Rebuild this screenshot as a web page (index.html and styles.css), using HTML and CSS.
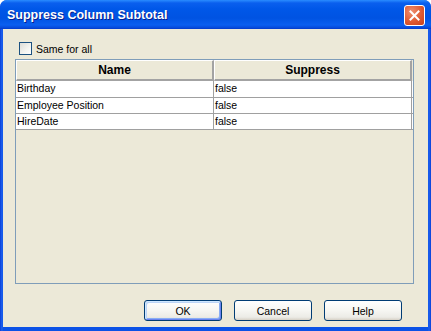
FILE: index.html
```html
<!DOCTYPE html>
<html lang="en">
<head>
  <meta charset="UTF-8" />
  <title>Suppress Column Subtotal</title>
  <link rel="stylesheet" href="styles.css">
</head>
<body>
  <div class="window">
    <div class="titlebar">
      <span class="title">Suppress Column Subtotal</span>
      <button class="close-btn" aria-label="Close">
        <svg width="11" height="11" viewBox="0 0 11 11">
          <path d="M1.5 1.5 L9.5 9.5 M9.5 1.5 L1.5 9.5" stroke="#fff" stroke-width="2" stroke-linecap="square" />
        </svg>
      </button>
    </div>

    <div class="content">
      <label class="same-all">
        <span class="checkbox"></span>
        Same for all
      </label>

      <div class="scroll-pane">
        <div class="grid-row header">
          <div class="head-cell">Name</div>
          <div class="head-cell">Suppress</div>
        </div>
        <div class="grid-row">
          <div class="cell">Birthday</div>
          <div class="cell">false</div>
        </div>
        <div class="grid-row">
          <div class="cell">Employee Position</div>
          <div class="cell">false</div>
        </div>
        <div class="grid-row">
          <div class="cell">HireDate</div>
          <div class="cell">false</div>
        </div>
      </div>

      <div class="actions">
        <button class="btn default">OK</button>
        <button class="btn">Cancel</button>
        <button class="btn">Help</button>
      </div>
    </div>
  </div>
</body>
</html>
```

FILE: styles.css
```css
html, body {
  margin: 0;
  background: #fff;
}
body {
  font-family: 'Liberation Sans', Arial, sans-serif;
  font-size: 10.5px;
  color: #000;
}
.window {
  width: 431px;
  height: 331px;
  display: flex;
  flex-direction: column;
  background: linear-gradient(90deg, #0a3fd6 0, #1f62f0 2px, #0b52e6 3px, #0b52e6 428px, #1f62f0 429px, #0a3fd6 100%);
  border-radius: 7px 7px 0 0;
  overflow: hidden;
}
.titlebar {
  height: 29px;
  flex: none;
  display: flex;
  align-items: center;
  justify-content: space-between;
  padding: 0 6px 0 7px;
  background: linear-gradient(#2a8cff 0, #0a5fee 3px, #0057e8 9px, #0053e2 18px, #0a5ff0 25px, #0648d8 28px, #0338c8 100%);
}
.title {
  color: #fff;
  font-weight: bold;
  font-size: 12.5px;
  text-shadow: 1px 1px 0 #0a1e8c;
  margin-top: 1px;
}
.close-btn {
  width: 21px;
  height: 21px;
  padding: 0;
  display: flex;
  align-items: center;
  justify-content: center;
  border: 1px solid #fff;
  border-radius: 3px;
  background: radial-gradient(circle at 35% 30%, #ef8f70 0, #de5a32 55%, #c7401a 100%);
  margin-top: 2px;
}
.content {
  flex: 1;
  margin: 0 3px 4px 3px;
  background: #ece9d8;
  display: flex;
  flex-direction: column;
  padding: 13px 14px 6px 12px;
}
.same-all {
  height: 13px;
  display: flex;
  align-items: center;
  gap: 4px;
  margin-left: 4px;
}
.checkbox {
  width: 11px;
  height: 11px;
  border: 1px solid #1c5180;
  background: linear-gradient(135deg, #dcdcd7 0, #f4f4f0 60%, #fff 100%);
}
.scroll-pane {
  margin-top: 4px;
  height: 225px;
  box-sizing: border-box;
  border: 1px solid #7f9db9;
  background: #ece9d8;
}
.grid-row {
  display: grid;
  grid-template-columns: 198px 198px;
  height: 16px;
  background: #fff;
  border-bottom: 1px solid #a0a0a0;
  box-sizing: border-box;
}
.grid-row:nth-child(2) {
  height: 17px;
}
.grid-row.header {
  height: 21px;
  background: #ece9d8;
  border-bottom: none;
}
.head-cell {
  font-weight: bold;
  font-size: 12px;
  text-align: center;
  border-top: 1px solid #fff;
  border-left: 1px solid #fff;
  border-right: 2px solid #a3a3a3;
  border-bottom: 2px solid #a3a3a3;
  line-height: 18px;
}
.cell {
  padding-left: 1px;
  line-height: 15px;
  border-right: 1px solid #a0a0a0;
  white-space: nowrap;
}
.actions {
  margin-top: 16px;
  display: flex;
  justify-content: flex-end;
  gap: 12px;
  padding-right: 12px;
}
.btn {
  width: 78px;
  height: 21px;
  padding: 0;
  font-family: 'Liberation Sans', Arial, sans-serif;
  font-size: 10.5px;
  color: #000;
  border: 1px solid #003c74;
  border-radius: 3px;
  background: linear-gradient(#ffffff 0, #f6f6f2 50%, #ecebe6 85%, #d6d0c5 100%);
}
.btn.default {
  box-shadow: inset 1px 1px 0 #cee7ff, inset -1px -1px 0 #6982ee, inset 2px 2px 0 #bcd4f6, inset -2px -2px 0 #89adf4;
}
```
